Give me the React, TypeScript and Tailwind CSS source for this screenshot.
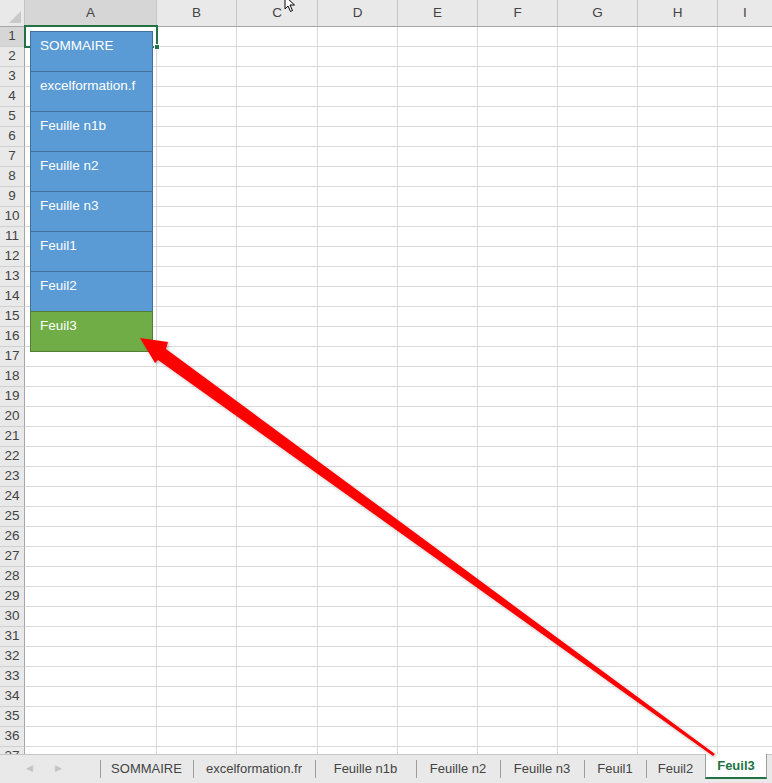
import React from "react";

const COLS = ["A", "B", "C", "D", "E", "F", "G", "H", "I"];
const COL_W = [132, 80, 81, 80, 80, 80, 80, 80, 55];
const ROWS = Array.from({ length: 37 }, (_, i) => i + 1);

const BUTTONS = [
  { label: "SOMMAIRE", green: false },
  { label: "excelformation.f", green: false },
  { label: "Feuille n1b", green: false },
  { label: "Feuille n2", green: false },
  { label: "Feuille n3", green: false },
  { label: "Feuil1", green: false },
  { label: "Feuil2", green: false },
  { label: "Feuil3", green: true },
];

const TABS = [
  { label: "SOMMAIRE", w: 93 },
  { label: "excelformation.fr", w: 122 },
  { label: "Feuille n1b", w: 101 },
  { label: "Feuille n2", w: 84 },
  { label: "Feuille n3", w: 84 },
  { label: "Feuil1", w: 62 },
  { label: "Feuil2", w: 59 },
];

export default function App() {
  return (
    <div
      className="relative w-[772px] h-[783px] overflow-hidden bg-white flex flex-col text-[#444]"
      style={{ fontFamily: '"Liberation Sans", Arial, sans-serif' }}
    >
      {/* en-tête des colonnes */}
      <div className="flex h-[27px] shrink-0 bg-[#e9e9e9] border-b border-[#a6a6a6]">
        <div className="relative w-[25px] shrink-0 border-r border-[#c4c4c4]">
          <svg className="absolute right-[3px] bottom-[3px]" width="12" height="12" viewBox="0 0 12 12">
            <polygon points="12,0 12,12 0,12" fill="#c9c9c9" />
          </svg>
        </div>
        {COLS.map((c, i) => (
          <div
            key={c}
            className={`shrink-0 flex items-end justify-center pb-[3px] text-[13.5px] border-r border-[#c4c4c4] ${
              i === 0 ? "bg-[#d6d6d6]" : ""
            }`}
            style={{ width: COL_W[i] }}
          >
            {c}
          </div>
        ))}
      </div>

      {/* grille */}
      <div className="flex-1 overflow-hidden">
        {ROWS.map((r) => (
          <div key={r} className="flex h-[20px]">
            <div
              className={`w-[25px] shrink-0 flex items-center justify-center text-[13.5px] border-r border-[#a6a6a6] border-b border-b-[#d0d0d0] ${
                r === 1 ? "bg-[#d6d6d6]" : "bg-[#e9e9e9]"
              }`}
            >
              {r}
            </div>
            {COL_W.map((w, i) => (
              <div key={i} className="shrink-0 border-r border-b border-[#d9d9d9]" style={{ width: w }} />
            ))}
          </div>
        ))}
      </div>

      {/* onglets */}
      <div className="h-[29px] shrink-0 bg-[#e9e9e9] border-t border-[#c6c6c6] flex items-stretch text-[13px]">
        <div className="w-[100px] shrink-0 flex items-center text-[#c4c4c4] text-[9px]">
          <span className="ml-[26px]">◀</span>
          <span className="ml-[22px]">▶</span>
        </div>
        {TABS.map((t) => (
          <div key={t.label} className="shrink-0 flex items-center justify-center relative" style={{ width: t.w }}>
            <span className="absolute left-0 top-[5px] bottom-[5px] w-px bg-[#9e9e9e]" />
            {t.label}
          </div>
        ))}
        <div className="w-[62px] shrink-0 -mt-px h-[25px] bg-white border-x border-[#9e9e9e] border-b-2 border-b-[#217346] flex items-center justify-center font-bold text-[#217346]">
          Feuil3
        </div>
      </div>

      {/* sélection A1 */}
      <div className="absolute left-[24px] top-[25px] w-[134px] h-[23px] border-2 border-[#217346]">
        <div className="absolute -right-[4px] -bottom-[4px] w-[6px] h-[6px] bg-[#217346] border border-white" />
      </div>

      {/* boutons */}
      <div className="absolute left-[30px] top-[31px] w-[123px] flex flex-col">
        {BUTTONS.map((b) => (
          <div
            key={b.label}
            className={`h-[41px] -mt-px first:mt-0 border px-[9px] pt-[6px] text-white text-[13.5px] leading-[16px] overflow-hidden whitespace-nowrap ${
              b.green ? "bg-[#70ad47] border-[#507e32]" : "bg-[#5b9bd5] border-[#41719c]"
            }`}
          >
            {b.label}
          </div>
        ))}
      </div>

      {/* flèche rouge */}
      <svg className="absolute inset-0 pointer-events-none" width="772" height="783" viewBox="0 0 772 783">
        <defs>
          <filter id="sh" x="-10%" y="-10%" width="120%" height="120%">
            <feDropShadow dx="1.5" dy="1.5" stdDeviation="1.5" floodColor="#000" floodOpacity="0.25" />
          </filter>
        </defs>
        <polygon
          points="140,338 168,342 166,349 715,754 713,756 158,360 155,363"
          fill="#ff0000"
          filter="url(#sh)"
        />
      </svg>

      {/* curseur */}
      <svg className="absolute left-[284px] top-[-5px]" width="13" height="18" viewBox="0 0 13 18">
        <path d="M1 1 L1 14 L4 11 L6.5 16.5 L8.5 15.5 L6 10 L10.5 10 Z" fill="#fff" stroke="#000" strokeWidth="1" strokeLinejoin="round" />
      </svg>
    </div>
  );
}
